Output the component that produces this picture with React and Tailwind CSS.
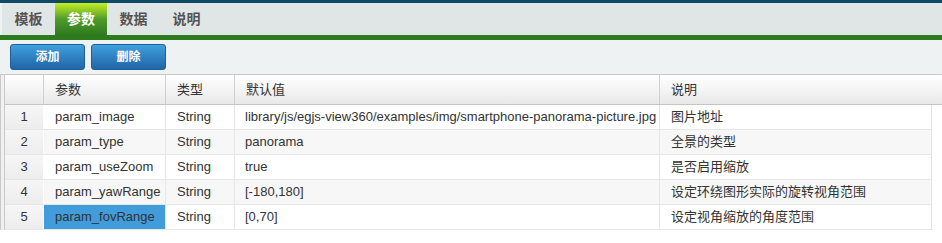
import React from "react";

const rows = [
  ["1", "param_image", "String", "library/js/egjs-view360/examples/img/smartphone-panorama-picture.jpg", "图片地址"],
  ["2", "param_type", "String", "panorama", "全景的类型"],
  ["3", "param_useZoom", "String", "true", "是否启用缩放"],
  ["4", "param_yawRange", "String", "[-180,180]", "设定环绕图形实际的旋转视角范围"],
  ["5", "param_fovRange", "String", "[0,70]", "设定视角缩放的角度范围"],
];

const font = { fontFamily: '"Liberation Sans", "Noto Sans CJK SC", sans-serif' };

export default function App() {
  return (
    <div className="w-[942px] h-[243px] overflow-hidden bg-white text-[#333]" style={font}>
      <div className="h-[3px] bg-[#0e4a66]" />
      <div className="h-[32px] bg-[#e0e5e5] flex border-l-2 border-[#eef2f2]">
        {["模板", "参数", "数据", "说明"].map((t, i) => (
          <div
            key={t}
            className={
              i === 1
                ? "w-[52px] flex items-center justify-center text-[14px] font-bold text-white bg-gradient-to-b from-[#c6f01c] via-[#4f9c2a] to-[#2e7a1e]"
                : "w-[53px] flex items-center justify-center text-[14px] font-bold text-[#555]"
            }
          >
            {t}
          </div>
        ))}
      </div>
      <div className="h-[5px] bg-[#2e7b1e]" />
      <div className="h-[35px] bg-[#eef2f3] flex items-center gap-[6px] pl-[10px] pb-[1px] border-b border-[#c8c8c8]">
        {["添加", "删除"].map((t) => (
          <div
            key={t}
            className="w-[75px] h-[26px] rounded-[3px] border border-[#1d5f9c] bg-gradient-to-b from-[#3fa0dd] to-[#2265a6] text-white text-[12px] font-bold flex items-center justify-center"
          >
            {t}
          </div>
        ))}
      </div>
      <div className="flex">
        <div className="w-[4px] border-l border-[#c8c8c8] bg-[#eef2f3]" />
        <div className="flex-1 border-l border-[#c8c8c8]">
          <div className="flex h-[30px] bg-gradient-to-b from-white to-[#e9e9e9] border-b border-[#c5c5c5] text-[13px]">
            <div className="w-[39px] border-r border-[#d0d0d0]" />
            <div className="w-[122px] border-r border-[#d0d0d0] flex items-center pl-[11px]">参数</div>
            <div className="w-[69px] border-r border-[#d0d0d0] flex items-center pl-[11px]">类型</div>
            <div className="w-[425px] border-r border-[#d0d0d0] flex items-center pl-[11px]">默认值</div>
            <div className="flex-1 flex items-center pl-[11px]">说明</div>
          </div>
          <div className="w-[927px] border-r border-[#e3e3e3]">
            {rows.map((r, i) => (
              <div
                key={r[0]}
                className={
                  "flex h-[25px] border-b border-[#e6e6e6] text-[13px] " +
                  (i % 2 === 1 ? "bg-[#f7f7f7]" : "bg-white")
                }
              >
                <div className="w-[39px] border-r border-white bg-gradient-to-b from-[#f6f6f6] to-[#ededed] flex items-center justify-center">
                  {r[0]}
                </div>
                <div
                  className={
                    "w-[122px] border-r border-[#e6e6e6] flex items-center pl-[11px] " +
                    (i === 4 ? "bg-[#419cdc]" : "")
                  }
                >
                  {r[1]}
                </div>
                <div className="w-[69px] border-r border-[#e6e6e6] flex items-center pl-[11px]">{r[2]}</div>
                <div className="w-[425px] border-r border-[#e6e6e6] flex items-center pl-[10px] whitespace-nowrap">{r[3]}</div>
                <div className="flex-1 flex items-center pl-[11px] whitespace-nowrap">{r[4]}</div>
              </div>
            ))}
          </div>
        </div>
      </div>
    </div>
  );
}
